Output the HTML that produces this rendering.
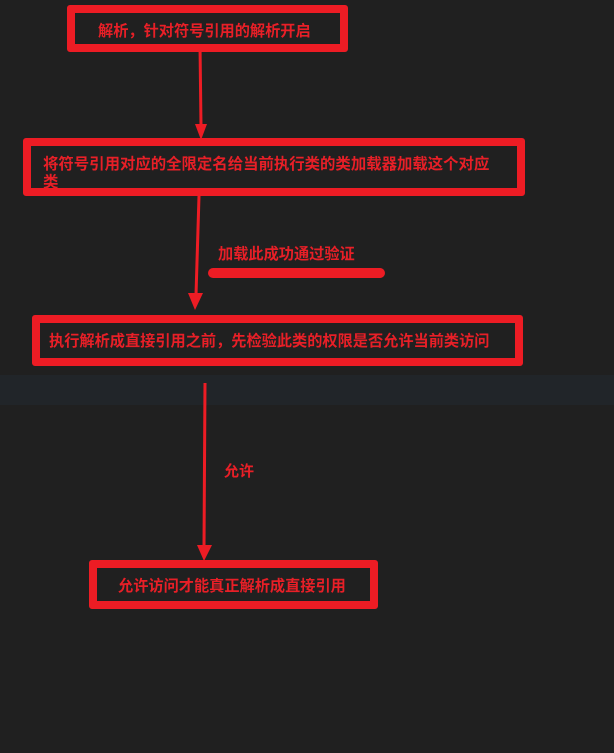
<!DOCTYPE html>
<html><head><meta charset="utf-8"><style>
html,body{margin:0;padding:0;}
body{width:614px;height:753px;background:#202020;position:relative;overflow:hidden;font-family:"Liberation Sans","Noto Sans CJK SC",sans-serif;font-weight:bold;color:#e81f27;}
.band{position:absolute;left:0;top:375px;width:614px;height:30px;background:#212529;}
.box{position:absolute;box-sizing:border-box;border:8px solid #ed1c24;border-radius:3px;background:#202020;overflow:hidden;}
.t{position:absolute;white-space:nowrap;line-height:1;}
svg{position:absolute;left:0;top:0;}
</style></head><body>
<div class="band"></div>
<svg width="614" height="753">
<g stroke="#ed1c24" stroke-width="3" fill="#ed1c24">
<line x1="200" y1="45" x2="201" y2="126"/>
<polygon points="195,124 207,124 201,140" stroke="none"/>
<line x1="199" y1="196" x2="196" y2="295"/>
<polygon points="188,293 203,293 195,310" stroke="none"/>
<line x1="205" y1="383" x2="204" y2="547"/>
<polygon points="197,545 212,545 204,561" stroke="none"/>
</g>
<rect x="208" y="268" width="177" height="10" rx="5" fill="#ed1c24"/>
</svg>
<div class="box" style="left:67px;top:5px;width:281px;height:47px;"></div>
<div class="t" style="left:98px;top:24px;font-size:15.2px;">解析，针对符号引用的解析开启</div>
<div class="box" style="left:23px;top:138px;width:502px;height:58px;">
<div class="t" style="left:12px;top:10px;font-size:15.4px;line-height:18px;">将符号引用对应的全限定名给当前执行类的类加载器加载这个对应<br>类</div>
</div>
<div class="t" style="left:218px;top:247px;font-size:15.2px;">加载此成功通过验证</div>
<div class="box" style="left:32px;top:315px;width:491px;height:51px;"></div>
<div class="t" style="left:49px;top:334px;font-size:15.2px;">执行解析成直接引用之前，先检验此类的权限是否允许当前类访问</div>
<div class="t" style="left:224px;top:464px;font-size:15px;">允许</div>
<div class="box" style="left:89px;top:560px;width:289px;height:49px;"></div>
<div class="t" style="left:118px;top:579px;font-size:15.2px;">允许访问才能真正解析成直接引用</div>
</body></html>
